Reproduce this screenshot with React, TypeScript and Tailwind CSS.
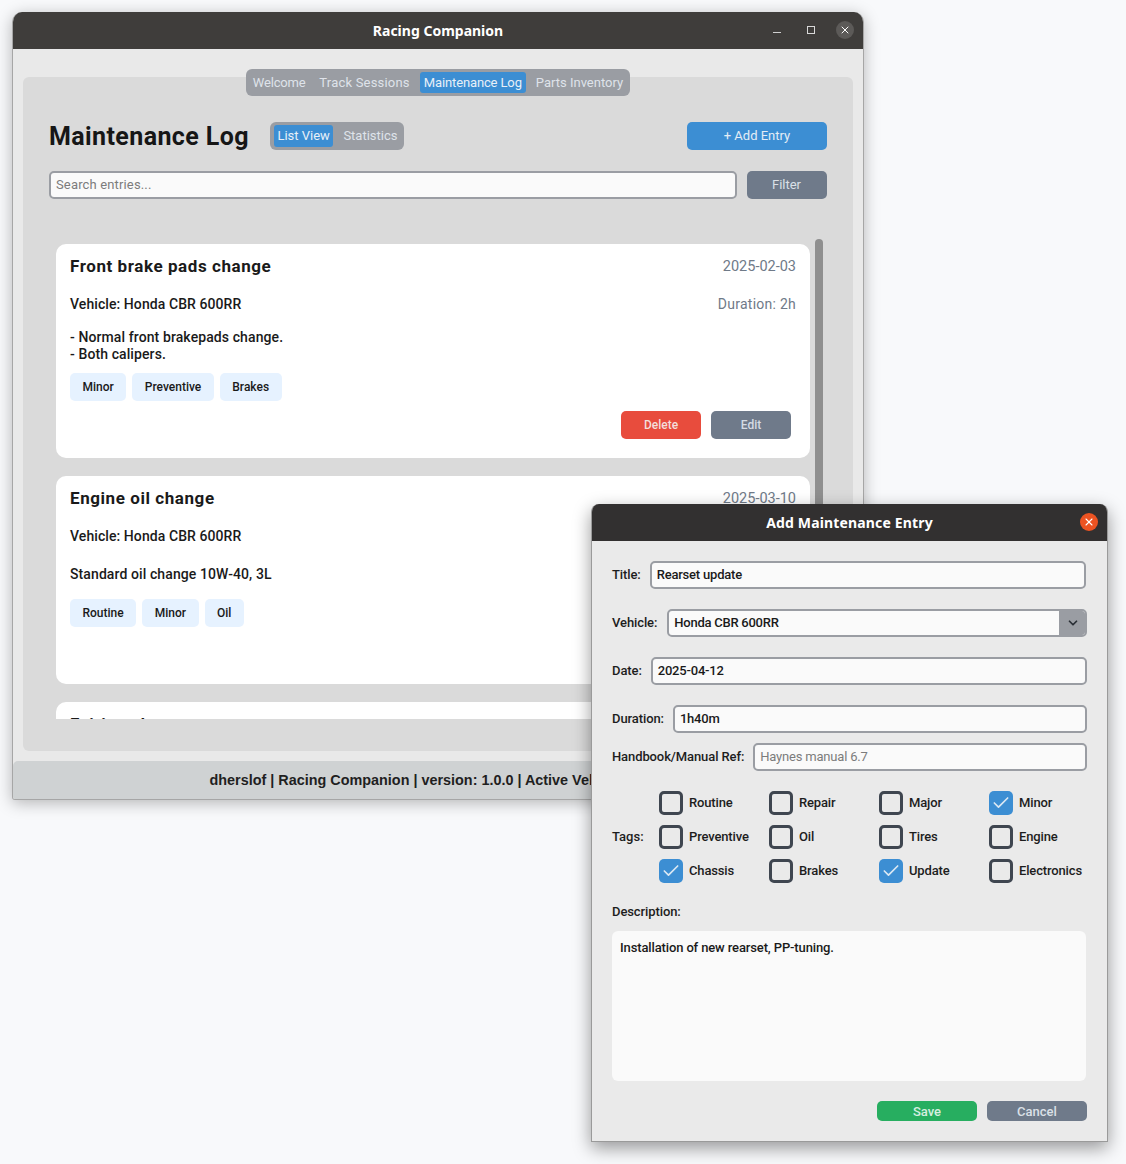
import { Check, ChevronDown, X } from 'lucide-react';

type EntryProps = {
  title: string;
  date: string;
  vehicle: string;
  duration: string;
  notes: string[];
  tags: string[];
  height: string;
  notesGap: string;
  tagsGap: string;
};

const tagRows = [
  [['Routine', false], ['Repair', false], ['Major', false], ['Minor', true]],
  [['Preventive', false], ['Oil', false], ['Tires', false], ['Engine', false]],
  [['Chassis', true], ['Brakes', false], ['Update', true], ['Electronics', false]],
] as [string, boolean][][];

function Entry({ title, date, vehicle, duration, notes, tags, height, notesGap, tagsGap }: EntryProps) {
  return (
    <div className={`shrink-0 rounded-[10px] bg-white px-[14px] pt-[12px] ${height}`}>
      <div className="flex items-center justify-between h-[22px]">
        <h3 className="text-[17px] font-bold tracking-[0.57px] text-[#1a1a1a]">{title}</h3>
        <span className="text-[14.5px] text-[#6f7a88]">{date}</span>
      </div>
      <div className="flex items-center justify-between h-[20px] mt-[16px] text-[14px]">
        <span className="font-medium tracking-[0.08px] text-[#1a1a1a]">{vehicle}</span>
        <span className="tracking-[0.25px] text-[#6f7a88]">{duration}</span>
      </div>
      <div className={`${notesGap} text-[14px] font-medium leading-[17px] tracking-[0.1px] text-[#1a1a1a]`}>
        {notes.map((n) => (
          <div key={n}>{n}</div>
        ))}
      </div>
      <div className={`flex gap-[6px] ${tagsGap}`}>
        {tags.map((t) => (
          <span key={t} className="flex h-[28px] items-center rounded-[5px] bg-[#e6f2ff] px-[12.5px] text-[12px] font-medium text-[#1a1a1a]">
            {t}
          </span>
        ))}
      </div>
      <div className="flex justify-end gap-[10px] mt-[10px] pr-[5px]">
        <button className="h-[28px] w-[80px] rounded-[5px] bg-[#e84c3d] text-[12px] font-medium text-[#f3dedb]">Delete</button>
        <button className="h-[28px] w-[80px] rounded-[5px] bg-[#6f7a8a] text-[12px] font-medium text-[#d5dbe4]">Edit</button>
      </div>
    </div>
  );
}

function MainWindow() {
  return (
    <div className="absolute left-[12px] top-[12px] flex h-[788px] w-[852px] flex-col overflow-hidden rounded-t-[10px] rounded-b-[3px] border-x border-b border-[#a6a6a6] bg-[#e9e9e9] shadow-[0_3px_16px_rgba(0,0,0,0.28)]">
      <div className="relative flex h-[37px] shrink-0 items-center justify-center bg-[#3f3d3b] text-white">
        <span className="font-['Noto_Sans'] text-[14px] font-bold">Racing Companion</span>
        <span className="absolute left-[760px] top-[20px] h-px w-[8px] bg-[#d0d0d0]" />
        <span className="absolute left-[794px] top-[14px] h-[8px] w-[8px] border border-[#d8d8d8]" />
        <div className="absolute left-[823px] top-[9px] flex h-[18px] w-[18px] items-center justify-center rounded-full bg-[#5c5a58]">
          <X className="h-[12px] w-[12px] text-white" strokeWidth={2} />
        </div>
      </div>

      <div className="mx-[10px] mt-[28px] flex h-[674px] shrink-0 flex-col rounded-[6px] bg-[#dadada]">
        <div className="-mt-[8px] flex justify-center">
          <div className="flex h-[27px] items-center gap-[6px] rounded-[6px] bg-[#9a9da3] px-[3px] text-[13px] text-[#dfe3ea]">
            <span className="px-[4px] tracking-[-0.2px]">Welcome</span>
            <span className="px-[4px] tracking-[0.2px]">Track Sessions</span>
            <span className="flex h-[21px] items-center rounded-[3px] bg-[#3c8ed3] px-[4px] tracking-[-0.13px] text-[#e8f0f8]">Maintenance Log</span>
            <span className="px-[4px]">Parts Inventory</span>
          </div>
        </div>

        <div className="mx-[26px] mt-[26px] flex h-[28px] items-center">
          <h1 className="pt-[2px] text-[25px] font-bold tracking-[0.4px] text-[#161616]">Maintenance Log</h1>
          <div className="ml-[21px] flex h-[28px] items-center rounded-[6px] bg-[#9a9da3] px-[4px] text-[13px] text-[#dfe3ea]">
            <span className="flex h-[22px] items-center rounded-[3px] bg-[#3c8ed3] px-[3.5px] text-[#e8f0f8]">List View</span>
            <span className="pl-[10px] pr-[3px]">Statistics</span>
          </div>
          <button className="ml-auto h-[28px] w-[140px] rounded-[5px] bg-[#3c8ed3] text-[13px] text-[#e4edf6]">+ Add Entry</button>
        </div>

        <div className="mx-[26px] mt-[21px] flex h-[28px] gap-[10px]">
          <div className="flex flex-1 items-center rounded-[5px] border-2 border-[#9a9da3] bg-[#fafafa] px-[5px] text-[13px] tracking-[0.15px] text-[#7c7c7c]">Search entries...</div>
          <button className="h-[28px] w-[80px] rounded-[5px] bg-[#6f7a8a] pr-[1px] text-[13px] text-[#dbe0e7]">Filter</button>
        </div>

        <div className="ml-[33px] mr-[30px] mt-[40px] flex h-[480px] gap-[5px] overflow-hidden">
          <div className="flex flex-1 flex-col gap-[18px] pt-[5px]">
            <Entry
              title="Front brake pads change"
              date="2025-02-03"
              vehicle="Vehicle: Honda CBR 600RR"
              duration="Duration: 2h"
              notes={['- Normal front brakepads change.', '- Both calipers.']}
              tags={['Minor', 'Preventive', 'Brakes']}
              height="h-[214px]"
              notesGap="mt-[15px]"
              tagsGap="mt-[10px]"
            />
            <Entry
              title="Engine oil change"
              date="2025-03-10"
              vehicle="Vehicle: Honda CBR 600RR"
              duration="Duration: 1h"
              notes={['Standard oil change 10W-40, 3L']}
              tags={['Routine', 'Minor', 'Oil']}
              height="h-[208px]"
              notesGap="mt-[20px]"
              tagsGap="mt-[16px]"
            />
            <Entry
              title="Fairing change"
              date="2025-03-18"
              vehicle="Vehicle: Honda CBR 600RR"
              duration="Duration: 3h"
              notes={['Replaced fairing']}
              tags={['Minor']}
              height="h-[200px]"
              notesGap="mt-[15px]"
              tagsGap="mt-[10px]"
            />
          </div>
          <div className="h-full w-[8px] shrink-0 rounded-[4px] bg-[#8f8f8f]" />
        </div>
      </div>

      <div className="mt-[10px] flex flex-1 items-center justify-center rounded-t-[5px] bg-[#cfd2d3] pt-[2px] font-['Liberation_Sans'] text-[14.4px] font-bold text-[#1f1f1f]">
        dherslof | Racing Companion | version: 1.0.0 | Active Vehicle: None
      </div>
    </div>
  );
}

function Field({ label, value, muted, select, className }: { label: string; value: string; muted?: boolean; select?: boolean; className: string }) {
  return (
    <div className={`flex items-center pl-[20px] pr-[20px] ${select ? 'gap-[10px]' : 'gap-[9px]'} ${className}`}>
      <label className="text-[13px] font-medium tracking-[-0.1px] text-[#1d1d1d]">{label}</label>
      {select ? (
        <div className="flex h-[28px] flex-1 items-stretch overflow-hidden rounded-[5px] border-2 border-[#9a9da3] bg-[#fafafa]">
          <span className="flex flex-1 items-center pl-[5px] text-[13px] font-medium tracking-[-0.25px] text-[#1a1a1a]">{value}</span>
          <span className="flex w-[26px] items-center justify-center bg-[#9a9da3] pl-[2px]">
            <ChevronDown className="h-[14px] w-[14px] text-[#2a2f36]" strokeWidth={3} />
          </span>
        </div>
      ) : (
        <div className={`flex h-[28px] flex-1 items-center rounded-[5px] border-2 border-[#9a9da3] bg-[#fafafa] pl-[5px] text-[13px] tracking-[-0.2px] ${muted ? 'text-[#7c7c7c]' : 'font-medium text-[#1a1a1a]'}`}>
          {value}
        </div>
      )}
    </div>
  );
}

function TagBox({ name, on }: { name: string; on: boolean }) {
  return (
    <div className="flex h-[24px] w-[110px] items-center gap-[6px]">
      {on ? (
        <span className="flex h-[24px] w-[24px] items-center justify-center rounded-[5px] bg-[#3c8ed3]">
          <Check className="h-[20px] w-[20px] text-[#dbe8f3]" strokeWidth={2} />
        </span>
      ) : (
        <span className="h-[24px] w-[24px] rounded-[5px] border-[3px] border-[#3f4650]" />
      )}
      <span className="text-[13px] font-medium tracking-[-0.15px] text-[#1d1d1d]">{name}</span>
    </div>
  );
}

function EntryDialog() {
  return (
    <div className="absolute left-[591px] top-[504px] flex h-[638px] w-[517px] flex-col overflow-hidden rounded-t-[8px] border-x border-b border-[#9a9a9a] bg-[#eaeaea] shadow-[0_6px_18px_rgba(0,0,0,0.4)]">
      <div className="relative flex h-[37px] shrink-0 items-center justify-center bg-[#323030]">
        <span className="font-['Noto_Sans'] text-[14px] font-bold tracking-[0.15px] text-white">Add Maintenance Entry</span>
        <div className="absolute left-[488px] top-[9px] flex h-[18px] w-[18px] items-center justify-center rounded-full bg-[#ec5322]">
          <X className="h-[12px] w-[12px] text-white" strokeWidth={2.2} />
        </div>
      </div>

      <Field label="Title:" value="Rearset update" className="mt-[20px] !pr-[21px]" />
      <Field label="Vehicle:" value="Honda CBR 600RR" select className="mt-[20px]" />
      <Field label="Date:" value="2025-04-12" className="mt-[20px]" />
      <Field label="Duration:" value="1h40m" className="mt-[20px]" />
      <Field label="Handbook/Manual Ref:" value="Haynes manual 6.7" muted className="mt-[10px]" />

      <div className="mt-[20px] flex items-center pl-[20px]">
        <label className="w-[47px] text-[13px] font-medium text-[#1d1d1d]">Tags:</label>
        <div className="flex flex-col gap-[10px]">
          {tagRows.map((row) => (
            <div key={row[0][0]} className="flex">
              {row.map(([name, on]) => (
                <TagBox key={name} name={name} on={on} />
              ))}
            </div>
          ))}
        </div>
      </div>

      <label className="ml-[20px] mt-[19px] text-[13px] font-medium tracking-[-0.1px] text-[#1d1d1d]">Description:</label>
      <div className="ml-[20px] mr-[21px] mt-[9px] h-[150px] rounded-[6px] bg-[#fafafa] px-[8px] py-[7px] text-[13px] font-medium tracking-[-0.13px] text-[#1a1a1a]">
        Installation of new rearset, PP-tuning.
      </div>

      <div className="mt-[20px] flex justify-end gap-[10px] pr-[20px]">
        <button className="h-[20px] w-[100px] rounded-[5px] bg-[#27ae60] pt-[1px] text-[13px] font-medium text-[#d6efe0]">Save</button>
        <button className="h-[20px] w-[100px] rounded-[5px] bg-[#6f7a8a] pt-[1px] text-[13px] font-medium text-[#dbe0e7]">Cancel</button>
      </div>
    </div>
  );
}

export default function App() {
  return (
    <div className="relative h-[1164px] w-[1126px] overflow-hidden bg-[#f8f9fb] font-['Roboto',sans-serif]">
      <MainWindow />
      <EntryDialog />
    </div>
  );
}
